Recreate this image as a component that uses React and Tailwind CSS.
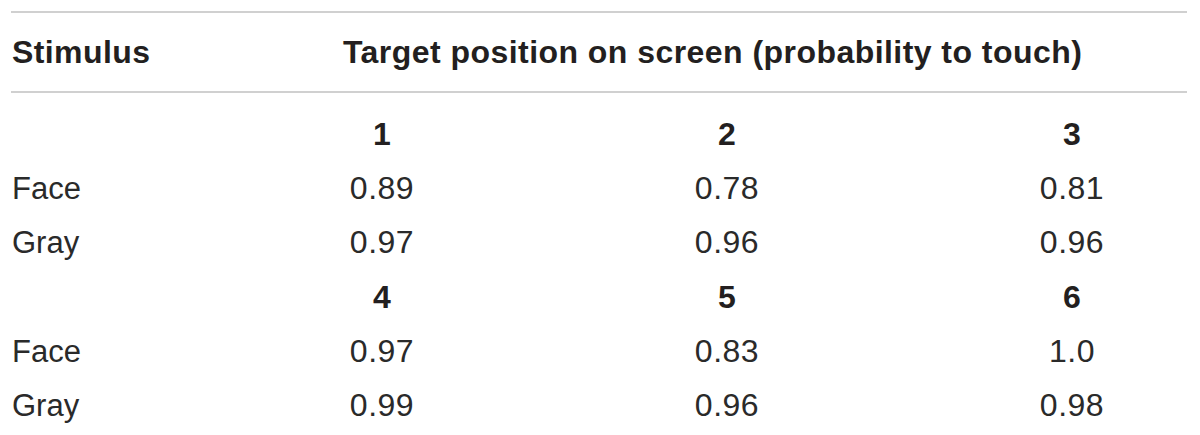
import React from "react";

const groups = [
  { head: ["1", "2", "3"], rows: [["Face", "0.89", "0.78", "0.81"], ["Gray", "0.97", "0.96", "0.96"]] },
  { head: ["4", "5", "6"], rows: [["Face", "0.97", "0.83", "1.0"], ["Gray", "0.99", "0.96", "0.98"]] },
];

export default function App() {
  return (
    <div className="w-[1200px] h-[435px] bg-white pt-[11px] pl-[11px] text-[#231f20] [font-family:'Liberation_Sans',Arial,sans-serif]">
      <div className="w-[1176px]">
        <div className="border-t-2 border-b-2 border-[#d0d0d0] grid grid-cols-[141px_230px_230px_230px] gap-x-[115px] h-[82px] items-center">
          <div className="text-[32px] font-bold leading-none pl-[1px] tracking-[0.4px]">Stimulus</div>
          <div className="col-span-3 text-[32px] font-bold leading-none pl-[76px] whitespace-nowrap tracking-[0.45px]">
            Target position on screen (probability to touch)
          </div>
        </div>
        <div className="pt-[14px]">
          {groups.map((g, gi) => (
            <div key={gi} className={gi === 1 ? "pt-[1px]" : ""}>
              <div className="grid grid-cols-[141px_230px_230px_230px] gap-x-[115px] h-[54px] items-center text-[32px] leading-none font-bold">
                <div></div>
                {g.head.map((h) => (
                  <div key={h} className="text-center">{h}</div>
                ))}
              </div>
              {g.rows.map((r, ri) => (
                <div key={ri} className="grid grid-cols-[141px_230px_230px_230px] gap-x-[115px] h-[54px] items-center text-[31px] leading-none text-[#2a2a2a]">
                  <div className="pl-[1px]">{r[0]}</div>
                  {r.slice(1).map((v, vi) => (
                    <div key={vi} className="text-center text-[32px] tracking-[0.5px]">{v}</div>
                  ))}
                </div>
              ))}
            </div>
          ))}
        </div>
      </div>
    </div>
  );
}
